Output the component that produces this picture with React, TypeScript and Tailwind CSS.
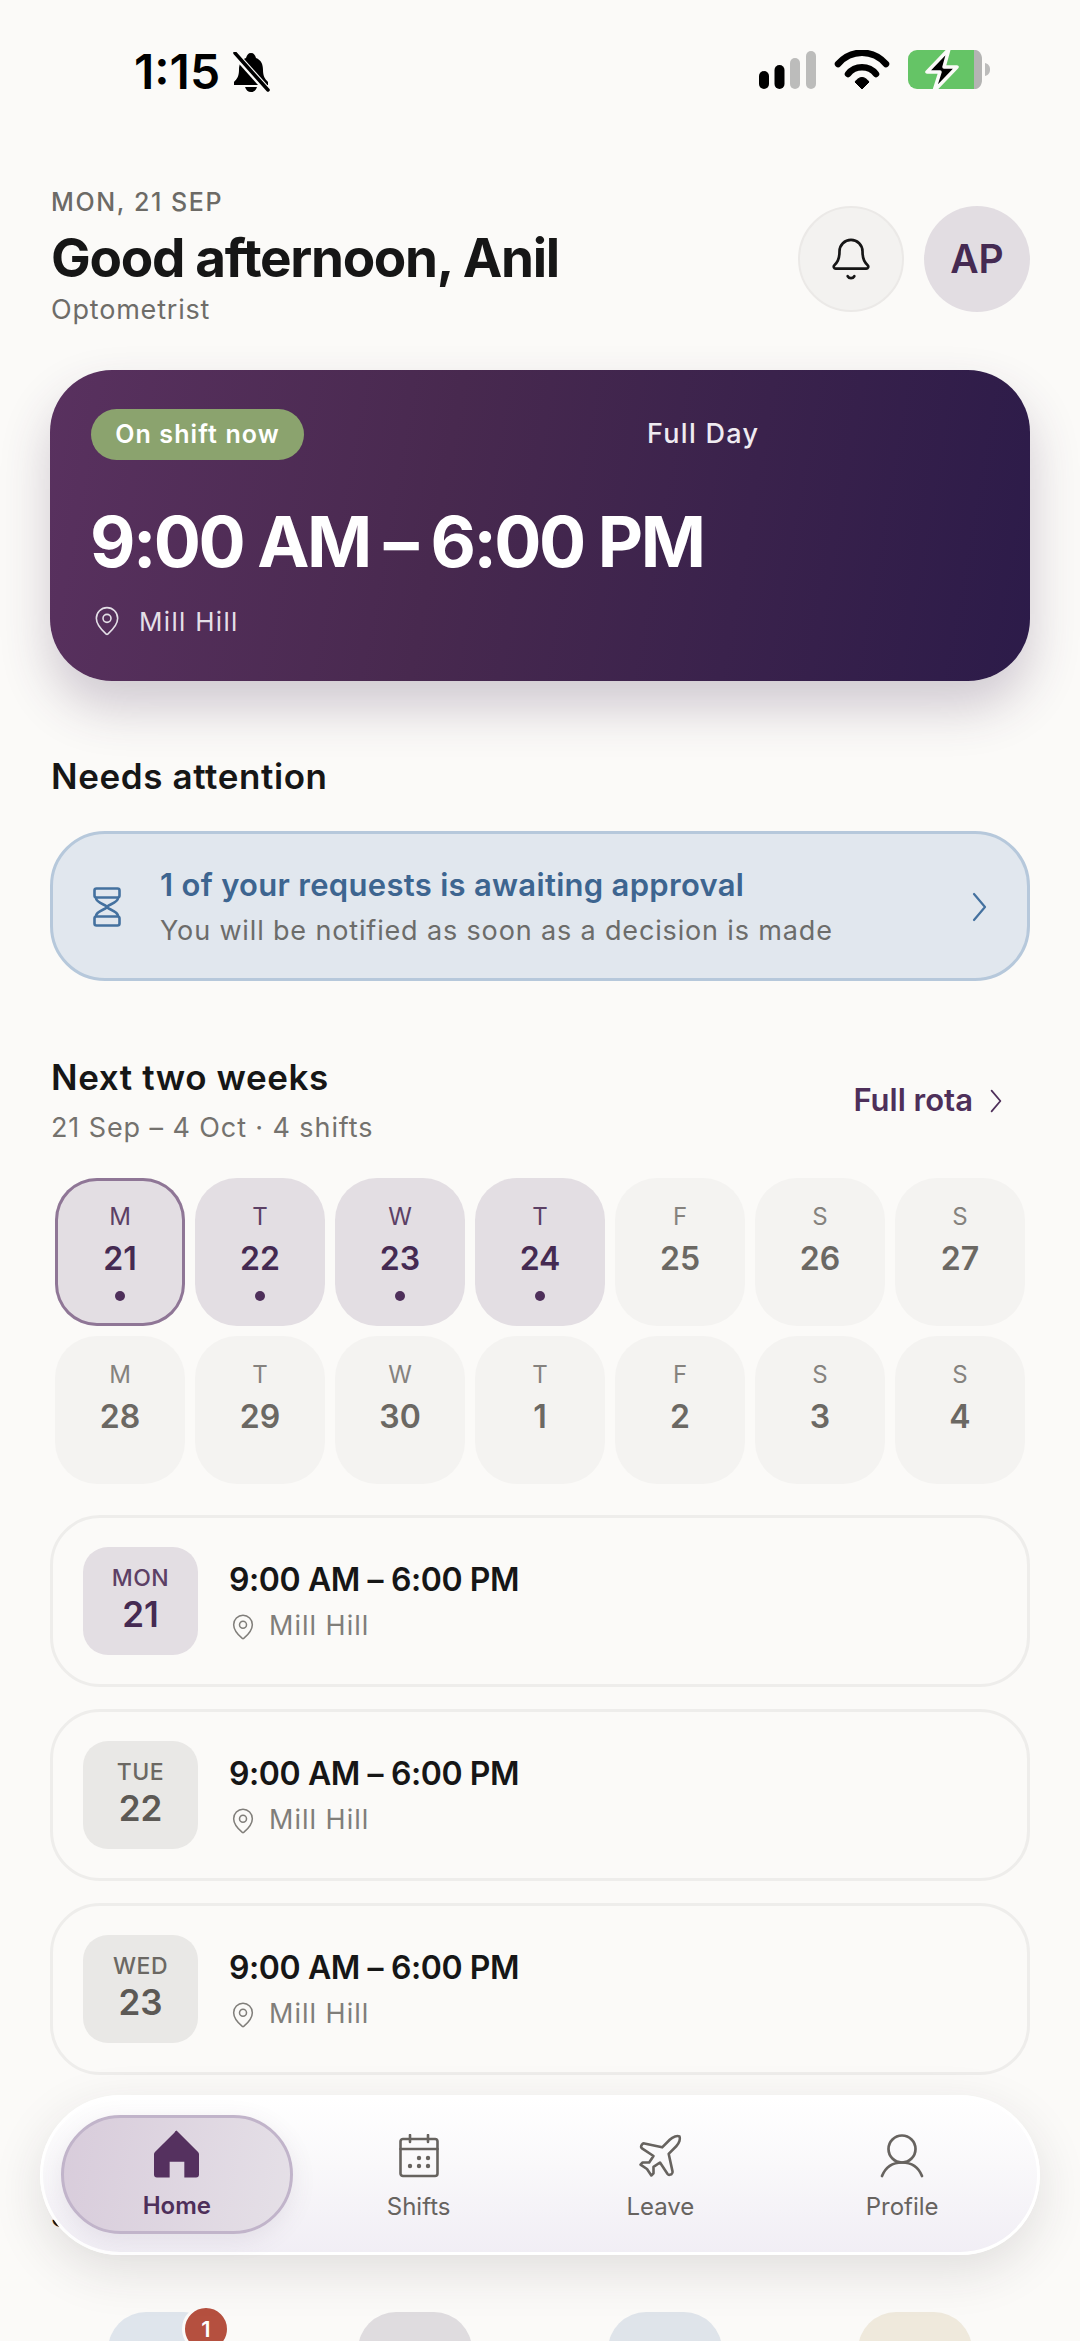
import { Bell, MapPin, Plane } from "lucide-react";

const week1 = [
  { d: "M", n: "21", on: true, today: true },
  { d: "T", n: "22", on: true },
  { d: "W", n: "23", on: true },
  { d: "T", n: "24", on: true },
  { d: "F", n: "25" },
  { d: "S", n: "26" },
  { d: "S", n: "27" },
  { d: "M", n: "28" },
  { d: "T", n: "29" },
  { d: "W", n: "30" },
  { d: "T", n: "1" },
  { d: "F", n: "2" },
  { d: "S", n: "3" },
  { d: "S", n: "4" },
] as { d: string; n: string; on?: boolean; today?: boolean }[];

const shifts = [
  { day: "MON", n: "21", today: true },
  { day: "TUE", n: "22" },
  { day: "WED", n: "23" },
];

const Chevron = ({ className }: { className: string }) => (
  <svg viewBox="0 0 15 30" className={className} fill="none" stroke="currentColor" strokeWidth="2.2" strokeLinecap="round" strokeLinejoin="round">
    <path d="M2 2 13 15 2 28" />
  </svg>
);

const StatusIcons = () => (
  <svg width="232" height="40" viewBox="0 0 232 40" className="block">
    <rect x="0" y="21" width="10" height="18" rx="5" fill="#000" />
    <rect x="15.500" y="15" width="10" height="24" rx="5" fill="#000" />
    <rect x="31" y="8" width="10" height="31" rx="5" fill="#bcbcbb" />
    <rect x="47" y="1" width="10" height="38" rx="5" fill="#bcbcbb" />
    <path d="M79 14C92 -1 114 -1 127 14" fill="none" stroke="#000" strokeWidth="6.500" strokeLinecap="round" />
    <path d="M89 24C96 15 110 15 117 24" fill="none" stroke="#000" strokeWidth="6.500" strokeLinecap="round" />
    <path d="M96 32C100 26 106 26 110 32L103 39Z" fill="#000" stroke="#000" strokeWidth="1" strokeLinejoin="round" />
    <path d="M158 0H215V39H158A9 9 0 0 1 149 30V9A9 9 0 0 1 158 0Z" fill="#65c466" />
    <path d="M215 0H217C221 1 223 5 223 9V30C223 34 221 38 217 39H215Z" fill="#b4b4b3" />
    <path d="M226 13C230 14 231 17 231 19.500C231 22 230 25 226 26Z" fill="#bcbcbb" />
    <path d="M190 -1 168 22H181L175 41 198 17H185Z" fill="#000" stroke="#fbfaf8" strokeWidth="3.500" strokeLinejoin="round" />
  </svg>
);

const App = () => {
  return (
    <div className="relative h-[2341px] w-[1080px] overflow-hidden bg-[#fbfaf8] font-['Inter',sans-serif] text-[#161616]">
      {/* status bar */}
      <div className="flex h-[187px] items-start justify-between pl-[134px] pr-[89px] pt-[50px]">
        <div className="flex items-center gap-[12px]">
          <span className="text-[48px] font-semibold leading-[44px] tracking-[0px] text-black">1:15</span>
          <svg width="38" height="40" viewBox="0 0 38 40">
            <path d="M19 1c3 0 4 2 5 5 5 2 7 6 7 12 0 6 2 9 5 12v3H2v-3c3-3 5-6 5-12 0-6 2-10 7-12 1-3 2-5 5-5Z" fill="#000" />
            <path d="M13 35h12c-1 3-3 5-6 5s-5-2-6-5Z" fill="#000" />
            <path d="M2 1 36 39" stroke="#fbfaf8" strokeWidth="7" />
            <path d="M3 1 36 38" stroke="#000" strokeWidth="3.500" strokeLinecap="round" />
          </svg>
        </div>
        <StatusIcons />
      </div>

      {/* header */}
      <div className="flex items-start justify-between px-[51px]">
        <div>
          <div className="text-[25px] font-medium leading-[30px] tracking-[1.600px] text-[#6c6a66]">MON, 21 SEP</div>
          <div className="mt-[9px] text-[53px] font-bold leading-[64px] tracking-[-1.300px]">Good afternoon, Anil</div>
          <div className="mt-[3px] text-[27px] leading-[34px] tracking-[0.800px] text-[#6e6c68]">Optometrist</div>
        </div>
        <div className="mr-[-1px] mt-[19px] flex gap-[20px]">
          <div className="flex h-[106px] w-[106px] items-center justify-center rounded-full border-2 border-[#ebe9e7] bg-[#f3f2f0]">
            <Bell size={46} strokeWidth={1.4} color="#161616" />
          </div>
          <div className="flex h-[106px] w-[106px] items-center justify-center rounded-full bg-[#e2dde2] text-[39px] font-semibold text-[#452a52]">AP</div>
        </div>
      </div>

      {/* current shift */}
      <div className="mx-[50px] mt-[43px] h-[311px] rounded-[62px] bg-[linear-gradient(100deg,#59315f_0%,#48294f_40%,#2c1b49_100%)] px-[41px] pt-[39px] text-white shadow-[0_26px_50px_rgba(70,45,85,0.24)]">
        <div className="flex items-center">
          <span className="flex h-[51px] w-[213px] items-center justify-center rounded-[26px] bg-[#8ba36e] text-[25px] font-semibold tracking-[1.100px]">On shift now</span>
          <span className="ml-[343px] text-[27px] font-medium tracking-[1.300px] text-[#efebf1]">Full Day</span>
        </div>
        <div className="mt-[42px] ml-[-1px] text-[70px] font-bold leading-[80px] tracking-[-2.500px]">9:00 AM – 6:00 PM</div>
        <div className="mt-[22px] flex h-[34px] items-center gap-[16px] text-[26px] tracking-[1.300px] text-[#e4dfe7]">
          <MapPin size={32} strokeWidth={1.2} />
          <span>Mill Hill</span>
        </div>
      </div>

      {/* needs attention */}
      <div className="mx-[51px] mt-[73px] text-[35px] font-semibold leading-[44px] tracking-[0.600px]">Needs attention</div>
      <div className="mx-[50px] mt-[33px] flex h-[150px] items-center rounded-[55px] border-[3px] border-[#b6c8db] bg-[#e1e7ee] pl-[40px] pr-[40px] pt-[2px]">
        <svg width="28" height="40" viewBox="0 0 28 40" fill="none" stroke="#44719f" strokeWidth="2.600" strokeLinejoin="round" className="shrink-0">
          <rect x="1.500" y="1.500" width="25" height="9" rx="2" />
          <path d="M3 11c0 5 11 7 11 9s-11 4-11 9M25 11c0 5-11 7-11 9s11 4 11 9" />
          <rect x="1.500" y="29.500" width="25" height="9" rx="2" />
        </svg>
        <div className="ml-[39px] flex-1">
          <div className="text-[31px] font-semibold leading-[40px] tracking-[0.300px] text-[#3d6590]">1 of your requests is awaiting approval</div>
          <div className="mt-[8px] text-[27px] leading-[36px] tracking-[0.850px] text-[#6c6c6a]">You will be notified as soon as a decision is made</div>
        </div>
        <Chevron className="h-[30px] w-[15px] text-[#44719f]" />
      </div>

      {/* next two weeks */}
      <div className="mx-[51px] mt-[74px] flex items-center justify-between">
        <div>
          <div className="text-[35px] font-semibold leading-[44px] tracking-[0.600px]">Next two weeks</div>
          <div className="mt-[11px] text-[27px] leading-[36px] tracking-[0.900px] text-[#74726e]">21 Sep – 4 Oct · 4 shifts</div>
        </div>
        <div className="mr-[27px] flex items-center gap-[17px] text-[31px] font-semibold text-[#4e2f5a]">
          Full rota
          <Chevron className="h-[26px] w-[12px]" />
        </div>
      </div>

      <div className="mx-[55px] mt-[32px] grid grid-cols-7 gap-[10px]">
        {week1.map((c, i) => (
          <div
            key={i}
            className={`flex h-[148px] flex-col items-center rounded-[42px] pt-[24px] ${c.on ? "bg-[#e3dee3]" : "bg-[#f4f3f1]"} ${c.today ? "ring-[3px] ring-inset ring-[#8f7696]" : ""}`}
          >
            <span className={`text-[24px] leading-[30px] ${c.on ? "text-[#5c4065]" : "text-[#85827e]"}`}>{c.d}</span>
            <span className={`mt-[7px] text-[32px] font-semibold leading-[40px] ${c.on ? "text-[#452a52]" : "text-[#6b6863]"}`}>{c.n}</span>
            {c.on && <span className="mt-[12px] h-[10px] w-[10px] rounded-full bg-[#4e2f5a]" />}
          </div>
        ))}
      </div>

      {/* shift rows */}
      <div className="mx-[50px] mt-[31px] flex flex-col gap-[22px]">
        {shifts.map((s) => (
          <div key={s.n} className="flex h-[172px] items-center rounded-[50px] border-[3px] border-[#eeedeb] pl-[30px]">
            <div className={`flex h-[108px] w-[115px] flex-col items-center justify-center rounded-[25px] pb-[3px] ${s.today ? "bg-[#e3dee3]" : "bg-[#e9e8e6]"}`}>
              <span className={`text-[23px] font-medium leading-[28px] tracking-[0.500px] ${s.today ? "text-[#5c4065]" : "text-[#6b6863]"}`}>{s.day}</span>
              <span className={`mt-[1px] text-[35px] font-semibold leading-[42px] ${s.today ? "text-[#452a52]" : "text-[#5c5955]"}`}>{s.n}</span>
            </div>
            <div className="ml-[31px]">
              <div className="text-[32px] font-semibold leading-[42px] tracking-[-0.400px]">9:00 AM – 6:00 PM</div>
              <div className="mt-[9px] flex h-[34px] items-center gap-[12px] text-[27px] tracking-[1px] text-[#807e7a]">
                <MapPin size={28} strokeWidth={1.3} />
                <span>Mill Hill</span>
              </div>
            </div>
          </div>
        ))}
      </div>

      {/* shortcuts, mostly under the nav */}
      <div className="mx-[51px] mt-[118px] text-[33px] font-semibold leading-[44px]">Shortcuts</div>
      <div className="mt-[75px] flex justify-between px-[108px]">
        <div className="relative h-[120px] w-[114px] rounded-[38px] bg-[#dfe5ec]">
          <span className="absolute left-[74px] top-[-7px] flex h-[48px] w-[48px] items-center justify-center rounded-full border-[3px] border-[#fbfaf8] bg-[#b5503f] text-[22px] font-semibold text-white">1</span>
        </div>
        <div className="h-[120px] w-[114px] rounded-[38px] bg-[#dfdcdf]" />
        <div className="h-[120px] w-[114px] rounded-[38px] bg-[#dfe4ea]" />
        <div className="h-[120px] w-[114px] rounded-[38px] bg-[#efe9dc]" />
      </div>

      {/* bottom nav */}
      <div className="absolute bottom-[86px] left-[40px] right-[40px] grid h-[160px] grid-cols-4 rounded-[80px] border-[3px] border-white bg-[linear-gradient(180deg,#ffffff_0%,#f9f8fa_45%,#f1eef5_100%)] pb-[18px] pl-[13px] pr-[14px] pt-[17px] shadow-[0_16px_50px_rgba(50,40,50,0.13)]">
        <div className="mx-[5px] flex flex-col items-center rounded-[60px] border-[3px] border-[#c1b4ca] bg-[linear-gradient(100deg,#d8ccdb_0%,#e5e0e7_100%)] pt-[12px] shadow-[0_6px_24px_rgba(90,70,100,0.1)]">
          <svg width="45" height="48" viewBox="0 0 46 48" fill="#55315f">
            <path d="M23 0 45 22a3 3 0 0 1 1 2v21a3 3 0 0 1-3 3H31V32H16v16H3a3 3 0 0 1-3-3V24a3 3 0 0 1 1-2L21 2a3 3 0 0 1 2-2Z" />
          </svg>
          <span className="mt-[14px] text-[24px] font-semibold leading-[28px] text-[#4e2f5a]">Home</span>
        </div>
        <div className="flex flex-col items-center pt-[19px] text-[#67635f]">
          <svg width="40" height="44" viewBox="0 0 40 44" fill="none" stroke="currentColor" strokeWidth="2.600" strokeLinecap="round" strokeLinejoin="round">
            <rect x="1.500" y="5" width="37" height="37" rx="2.500" />
            <path d="M1.500 15h37M11 1v7M29 1v7" />
            <g fill="currentColor" stroke="none">
              <circle cx="20" cy="24" r="2.200" /><circle cx="29" cy="24" r="2.200" />
              <circle cx="11" cy="32" r="2.200" /><circle cx="20" cy="32" r="2.200" /><circle cx="29" cy="32" r="2.200" />
            </g>
          </svg>
          <span className="mt-[15px] text-[24px] leading-[28px]">Shifts</span>
        </div>
        <div className="flex flex-col items-center pt-[19px] text-[#67635f]">
          <div className="flex h-[44px] w-[44px] items-center justify-center">
            <Plane size={52} strokeWidth={1.2} className="shrink-0" />
          </div>
          <span className="mt-[15px] text-[24px] leading-[28px]">Leave</span>
        </div>
        <div className="flex flex-col items-center pt-[19px] text-[#67635f]">
          <svg width="44" height="44" viewBox="0 0 44 44" fill="none" stroke="currentColor" strokeWidth="2.700" strokeLinecap="round">
            <circle cx="22" cy="15" r="13.500" />
            <path d="M2 42C6 32 14 28.500 22 28.500S38 32 42 42" />
          </svg>
          <span className="mt-[15px] text-[24px] leading-[28px]">Profile</span>
        </div>
      </div>
    </div>
  );
};

export default App;
